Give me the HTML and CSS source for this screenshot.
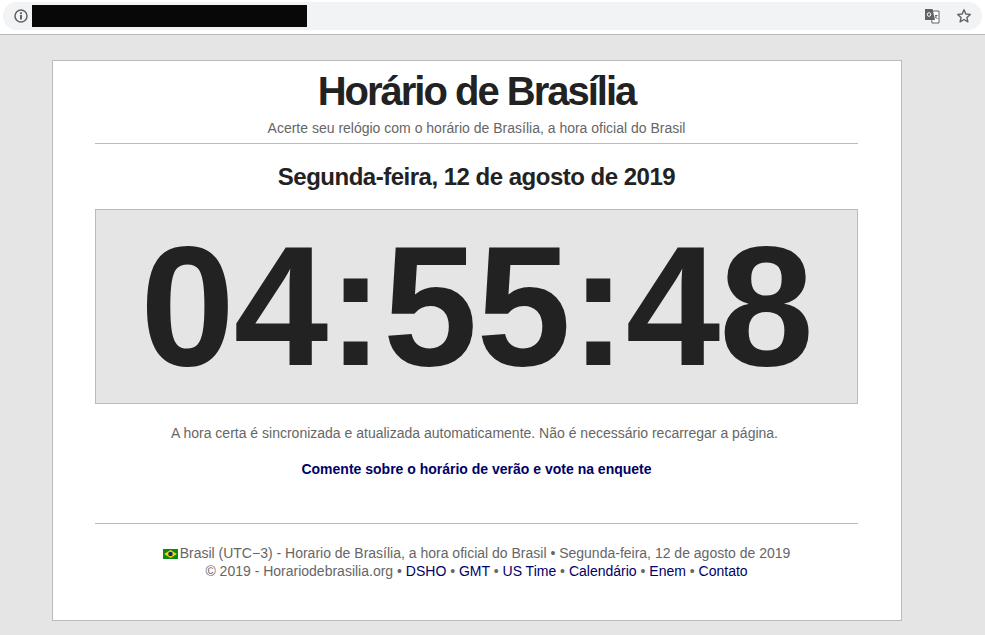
FILE: index.html
```html
<!DOCTYPE html>
<html lang="pt-BR">
<head>
    <meta charset="UTF-8">
    <title>Horário de Brasília</title>
    <link rel="stylesheet" href="styles.css">
</head>
<body>
    <div class="toolbar">
        <div class="omnibox">
            <svg class="info-icon" width="14" height="14" viewBox="0 0 14 14">
                <circle cx="7" cy="7" r="6" fill="none" stroke="#5f6368" stroke-width="1.5"/>
                <rect x="6" y="6" width="2" height="4.500" fill="#5f6368"/>
                <rect x="6" y="3.300" width="2" height="1.800" fill="#5f6368"/>
            </svg>
            <div class="url-mask"></div>
            <svg class="translate-icon" width="16" height="16" viewBox="0 0 16 16">
                <path d="M7 3h8v12H8z" fill="#fff" stroke="#5f6368" stroke-width="1"/>
                <path d="M1 1h7.500l2.500 11H1z" fill="#5f6368"/>
                <circle cx="5" cy="6.500" r="1.800" fill="none" stroke="#fff" stroke-width="1"/>
                <path d="M11 7.500h2.500M12.200 7c0 2-.700 3-1.500 3.500M11 8.500l2.500 2.500" fill="none" stroke="#5f6368" stroke-width="1"/>
            </svg>
            <svg class="star-icon" width="16" height="16" viewBox="0 0 16 16">
                <path d="M8 1.800l1.800 4.200 4.500.4-3.400 3 1 4.400L8 11.500l-3.900 2.300 1-4.400-3.400-3 4.500-.4z" fill="none" stroke="#5f6368" stroke-width="1.400" stroke-linejoin="round"/>
            </svg>
        </div>
    </div>

    <div class="page">
        <div class="container">
            <div class="header">
                <h1>Horário de Brasília</h1>
                <p class="subtitle">Acerte seu relógio com o horário de Brasília, a hora oficial do Brasil</p>
            </div>
            <h2 class="date">Segunda-feira, 12 de agosto de 2019</h2>
            <div class="clock" id="clock">04:55:48</div>
            <p class="note">A hora certa é sincronizada e atualizada automaticamente. Não é necessário recarregar a página.</p>
            <p class="comment"><a href="#">Comente sobre o horário de verão e vote na enquete</a></p>
            <div class="footer">
                <div>
                    <svg class="flag" width="15" height="10" viewBox="0 0 15 10">
                        <rect width="15" height="10" fill="#0a8a10"/>
                        <path d="M7.500 1L13.800 5 7.500 9 1.200 5z" fill="#f5d800"/>
                        <circle cx="7.500" cy="5" r="2.300" fill="#1a2a7a"/>
                    </svg><span>Brasil (UTC−3) - Horario de Brasília, a hora oficial do Brasil • Segunda-feira, 12 de agosto de 2019</span>
                </div>
                <div>© 2019 - Horariodebrasilia.org • <a href="#">DSHO</a> • <a href="#">GMT</a> • <a href="#">US Time</a> • <a href="#">Calendário</a> • <a href="#">Enem</a> • <a href="#">Contato</a></div>
            </div>
        </div>
    </div>
</body>
</html>
```

FILE: styles.css
```css
html, body {
    margin: 0;
    padding: 0;
}
body {
    height: 635px;
    overflow: hidden;
    background-color: #e5e5e5;
    font-family: "Liberation Sans", Arial, sans-serif;
    color: #666;
}
a {
    color: #000066;
    text-decoration: none;
}
.toolbar {
    height: 35px;
    padding-top: 2px;
    box-sizing: border-box;
    background-color: #fff;
    border-bottom: 1px solid #b8b8b8;
}
.omnibox {
    display: flex;
    align-items: center;
    height: 28px;
    margin: 0 3px;
    padding: 0 10px 0 11px;
    background-color: #f1f3f4;
    border-radius: 14px;
}
.info-icon {
    flex: none;
}
.url-mask {
    width: 275px;
    height: 22px;
    margin-left: 4px;
    background-color: #080808;
}
.translate-icon {
    margin-left: auto;
}
.star-icon {
    margin-left: 16px;
}
.page {
    padding-top: 25px;
}
.container {
    width: 763px;
    height: 559px;
    margin-left: 52px;
    padding: 0 43px 0 42px;
    background-color: #fff;
    border: 1px solid #bbb;
    text-align: center;
}
.header {
    border-bottom: 1px solid #bbb;
    padding-bottom: 7px;
}
h1 {
    margin: 0;
    padding-top: 7px;
    font-size: 40px;
    line-height: 46px;
    letter-spacing: -2px;
    color: #222;
}
.subtitle {
    margin: 6px 0 0;
    font-size: 14px;
    line-height: 16px;
}
.date {
    margin: 19px 0 18px;
    font-size: 24px;
    line-height: 28px;
    letter-spacing: -0.5px;
    color: #222;
}
.clock {
    height: 193px;
    background-color: #e5e5e5;
    border: 1px solid #bbb;
    color: #222;
    font-size: 170px;
    font-weight: bold;
    line-height: 192px;
    letter-spacing: -1px;
}
.note {
    margin: 21px 4px 0 0;
    font-size: 14px;
    line-height: 16px;
}
.comment {
    margin: 20px 0 0;
    font-size: 14px;
    line-height: 16px;
    font-weight: bold;
}
.footer {
    margin-top: 46px;
    padding-top: 20px;
    border-top: 1px solid #bbb;
    font-size: 14px;
    line-height: 18px;
}
.flag {
    margin-right: 2px;
    vertical-align: -1px;
}
```
